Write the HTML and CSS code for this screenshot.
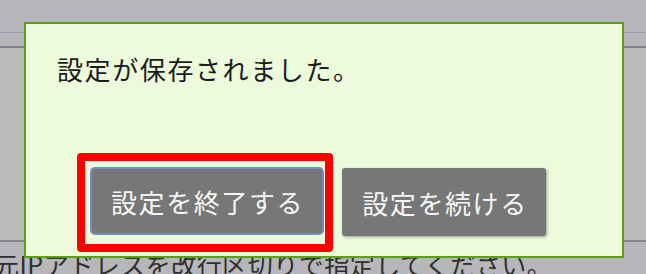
FILE: index.html
```html
<!DOCTYPE html>
<html lang="ja">
<head>
<meta charset="utf-8">
<link rel="stylesheet" href="styles.css">
</head>
<body>
<div class="page">
  <div class="header"></div>
  <div class="panel"></div>
  <p class="hint">元IPアドレスを改行区切りで指定してください。</p>
</div>
<div class="dialog">
  <p class="message">設定が保存されました。</p>
  <div class="actions">
    <button class="btn btn-focus">設定を終了する</button>
    <button class="btn">設定を続ける</button>
  </div>
  <div class="highlight"></div>
</div>
</body>
</html>
```
FILE: styles.css
```css
html, body {
  margin: 0;
  padding: 0;
}
body {
  width: 646px;
  height: 274px;
  overflow: hidden;
  background: #b5b7ba;
  font-family: "Noto Sans CJK JP", "Noto Sans", sans-serif;
  position: relative;
}
.page {
  display: flex;
  flex-direction: column;
}
.header {
  height: 32px;
  border-bottom: 1px solid #9d9eb4;
}
.panel {
  margin-top: 13px;
  height: 192px;
  border-top: 2px solid #808080;
  border-bottom: 2px solid #858585;
  background: #bcbdbb;
}
.hint {
  margin: 6px 0 0 -6px;
  font-size: 25px;
  line-height: 32px;
  letter-spacing: 0.5px;
  color: #2e2e2e;
  white-space: nowrap;
}
.dialog {
  position: absolute;
  left: 24px;
  top: 22px;
  width: 596px;
  height: 232px;
  border: 2px solid #5a9e1c;
  background: #edfadc;
  box-sizing: content-box;
}
.message {
  margin: 0;
  padding: 25px 0 0 31px;
  font-size: 26px;
  line-height: 40px;
  letter-spacing: 1.6px;
  color: #1c1c1c;
}
.actions {
  display: flex;
  gap: 18px;
  margin: 78px 0 0 64px;
  align-items: flex-start;
}
.btn {
  font-family: inherit;
  font-size: 26px;
  letter-spacing: 1.6px;
  color: #f6f6f6;
  background: #777777;
  border: 0;
  border-radius: 3px;
  height: 68px;
  padding: 0 18px 0 20px;
  box-shadow: 1px 1px 3px rgba(0, 0, 0, 0.35);
  margin-top: 1px;
}
.btn-focus {
  border: 2px solid #6f8fc4;
  border-radius: 5px;
  margin-top: 0;
  padding: 0 18px 0 19px;
  box-shadow: none;
}
.highlight {
  position: absolute;
  left: 51px;
  top: 129px;
  width: 240px;
  height: 83px;
  border: 8px solid #ff0000;
  border-radius: 4px;
}
```
